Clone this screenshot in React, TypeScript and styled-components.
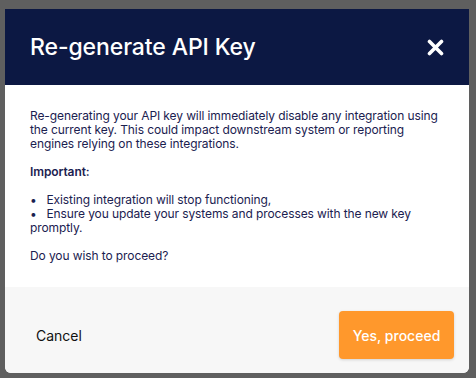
import React, { FC } from 'react';
import styled, { createGlobalStyle } from 'styled-components';

const GlobalStyle = createGlobalStyle`
  html, body {
    margin: 0;
    padding: 0;
    background: #5f5f5f;
  }
  * { box-sizing: border-box; }
`;

const bullets = [
  'Existing integration will stop functioning,',
  'Ensure you update your systems and processes with the new key promptly.',
];

const App: FC = (): JSX.Element => {
  return (
    <>
      <GlobalStyle />
      <Backdrop>
        <Modal>
          <Header>
            <Title>Re-generate API Key</Title>
            <CloseButton aria-label="Close">
              <svg width="17" height="17" viewBox="0 0 17 17">
                <path d="M2.5 2.5 L14.5 14.5 M14.5 2.5 L2.5 14.5" stroke="#fff" strokeWidth="3.6" strokeLinecap="round" />
              </svg>
            </CloseButton>
          </Header>
          <Body>
            <Line>Re-generating your API key will immediately disable any integration using the current key. This could impact downstream system or reporting engines relying on these integrations.</Line>
            <Gap />
            <Line bold>Important:</Line>
            <Gap />
            {bullets.map((b) => (
              <Line key={b}>
                {'•\u00a0\u00a0\u00a0'}
                {b}
              </Line>
            ))}
            <Gap />
            <Line>Do you wish to proceed?</Line>
          </Body>
          <Footer>
            <CancelButton>Cancel</CancelButton>
            <ProceedButton>Yes, proceed</ProceedButton>
          </Footer>
        </Modal>
      </Backdrop>
    </>
  );
};

export default App;

const Backdrop = styled.div`
  width: 476px;
  height: 378px;
  padding: 9px 7px 5px 5px;
  background: #5f5f5f;
`;

const Modal = styled.div`
  width: 464px;
  height: 364px;
  display: flex;
  flex-direction: column;
  border-radius: 0 0 6px 6px;
  overflow: hidden;
  background: #fff;
`;

const Header = styled.div`
  height: 76px;
  flex-shrink: 0;
  background: #0c1843;
  display: flex;
  align-items: center;
  justify-content: space-between;
  padding: 0 25px 0 25px;
`;

const Title = styled.h2`
  margin: 0;
  font-family: Inter, "Noto Sans", sans-serif;
  font-size: 23px;
  font-weight: 500;
  color: #fff;
  letter-spacing: -0.1px;
`;

const CloseButton = styled.button`
  border: none;
  background: none;
  padding: 0;
  display: flex;
  cursor: pointer;
`;

const Body = styled.div`
  flex: 1;
  padding: 24px 20px 0 25px;
  font-family: Inter, "Noto Sans", sans-serif;
  font-size: 12px;
  letter-spacing: -0.1px;
  line-height: 14px;
  color: #1b2150;
`;

const Line = styled.div<{ bold?: boolean }>`
  font-weight: ${(p) => (p.bold ? 600 : 400)};
`;

const Gap = styled.div`
  height: 14px;
`;

const Footer = styled.div`
  height: 86px;
  flex-shrink: 0;
  background: #f7f7f7;
  display: flex;
  align-items: center;
  justify-content: space-between;
  padding: 10px 15px 0 31px;
`;

const CancelButton = styled.button`
  border: none;
  background: none;
  padding: 0;
  font-family: Inter, "Liberation Sans", sans-serif;
  font-size: 14px;
  color: #111;
  cursor: pointer;
`;

const ProceedButton = styled.button`
  width: 115px;
  height: 48px;
  border: none;
  border-radius: 4px;
  background: #ff982c;
  color: #fff;
  font-family: Inter, "Liberation Sans", sans-serif;
  font-size: 14px;
  font-weight: 500;
  box-shadow: 0 1px 3px rgba(0, 0, 0, 0.15);
  cursor: pointer;
`;
